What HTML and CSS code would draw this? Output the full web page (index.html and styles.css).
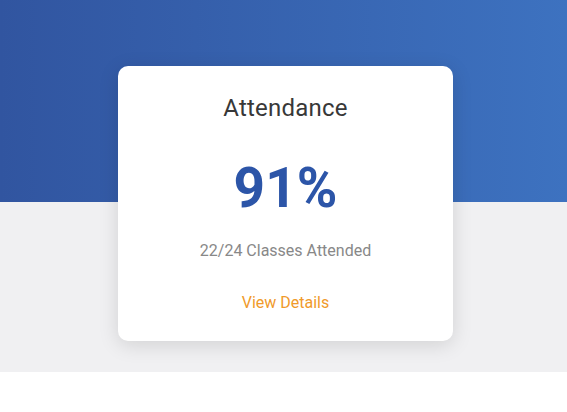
FILE: index.html
```html
<!DOCTYPE html>
<html lang="en">
<head>
<meta charset="utf-8">
<title>Attendance</title>
<link rel="stylesheet" href="styles.css">
</head>
<body>
<section class="stage">
  <div class="card">
    <h2 class="card-title">Attendance</h2>
    <div class="card-value">91%</div>
    <p class="card-sub">22/24 Classes Attended</p>
    <a class="card-link" href="#">View Details</a>
  </div>
</section>
</body>
</html>
```

FILE: styles.css
```css
html, body {
  margin: 0;
  padding: 0;
  background: #ffffff;
}
body {
  font-family: Roboto, "Liberation Sans", Arial, sans-serif;
}
.stage {
  height: 372px;
  box-sizing: border-box;
  padding: 66px 0 0 4px;
  display: flex;
  justify-content: center;
  align-items: flex-start;
  background:
    linear-gradient(90deg, #3155a0 0%, #3d72c0 100%) top left / 100% 202px no-repeat,
    #f0f0f2;
}
.card {
  width: 335px;
  height: 275px;
  box-sizing: border-box;
  background: #ffffff;
  border-radius: 10px;
  box-shadow: 0 4px 20px rgba(0, 0, 0, 0.13);
  display: flex;
  flex-direction: column;
  align-items: center;
  padding-top: 28px;
}
.card-title {
  margin: 0;
  font-size: 24px;
  font-weight: 400;
  line-height: 28px;
  letter-spacing: 0.2px;
  color: #383838;
}
.card-value {
  margin-top: 34px;
  font-size: 55px;
  font-weight: 700;
  line-height: 64px;
  color: #2c55a8;
}
.card-sub {
  margin: 21px 0 0;
  font-size: 16px;
  line-height: 20px;
  color: #888888;
}
.card-link {
  margin-top: 32px;
  font-size: 16px;
  line-height: 20px;
  color: #f09a2a;
  text-decoration: none;
}
```
